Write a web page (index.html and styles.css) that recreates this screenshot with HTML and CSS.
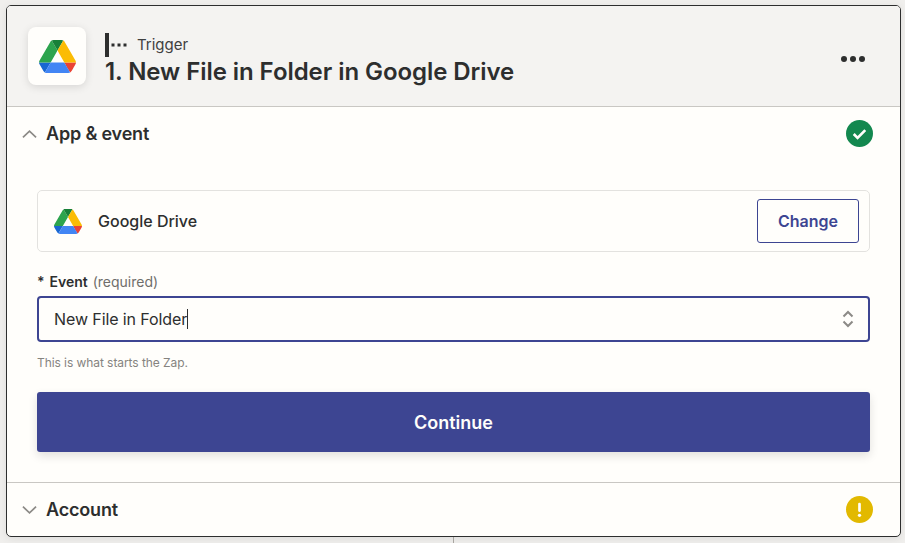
FILE: index.html
```html
<!DOCTYPE html>
<html lang="en">
<head>
  <meta charset="UTF-8" />
  <meta name="viewport" content="width=device-width, initial-scale=1" />
  <title>Trigger step</title>
  <link rel="stylesheet" href="styles.css">
</head>
<body>

<svg class="defs" width="0" height="0" aria-hidden="true">
  <symbol id="drive" viewBox="0 0 87.3 78">
    <path d="m6.6 66.85 3.85 6.65c.8 1.4 1.95 2.5 3.3 3.3l13.75-23.8h-27.5c0 1.55.4 3.1 1.2 4.5z" fill="#1967d2"/>
    <path d="m43.65 25-13.75-23.8c-1.35.8-2.5 1.9-3.3 3.3l-25.4 44a9.06 9.06 0 0 0 -1.2 4.5h27.5z" fill="#2da44e"/>
    <path d="m73.55 76.8c1.35-.8 2.5-1.9 3.3-3.3l1.6-2.75 7.65-13.25c.8-1.4 1.2-2.95 1.2-4.5h-27.502l5.852 11.5z" fill="#ea4335"/>
    <path d="m43.65 25 13.75-23.8c-1.35-.8-2.9-1.2-4.5-1.2h-18.5c-1.6 0-3.15.45-4.5 1.2z" fill="#188038"/>
    <path d="m59.8 53h-32.3l-13.75 23.8c1.35.8 2.9 1.2 4.5 1.2h50.8c1.6 0 3.15-.45 4.5-1.2z" fill="#4285f4"/>
    <path d="m73.4 26.5-12.7-22c-.8-1.4-1.95-2.5-3.3-3.3l-13.75 23.8 16.15 28h27.45c0-1.55-.4-3.1-1.2-4.5z" fill="#fbbc04"/>
  </symbol>
</svg>

<main class="card">
  <header class="card-head">
    <div class="app-tile">
      <svg class="drive-lg"><use href="#drive"/></svg>
    </div>
    <div class="head-text">
      <div class="step-kind">
        <svg class="trigger-icon" viewBox="0 0 24 24">
          <rect x="0" y="0" width="4" height="24" fill="#2d2e2e"/>
          <rect x="6.5" y="10.5" width="3" height="3" fill="#2d2e2e"/>
          <rect x="12.5" y="10.5" width="3" height="3" fill="#2d2e2e"/>
          <rect x="18.5" y="10.5" width="3" height="3" fill="#2d2e2e"/>
        </svg>
        <span>Trigger</span>
      </div>
      <h1>1. New File in Folder in Google Drive</h1>
    </div>
    <div class="more">
      <i></i><i></i><i></i>
    </div>
  </header>

  <section class="section">
    <div class="section-head">
      <svg class="chevron" viewBox="0 0 16 10"><path d="M1 8.5 8 2l7 6.5" /></svg>
      <h2>App &amp; event</h2>
      <svg class="status" viewBox="0 0 28 28">
        <circle cx="14" cy="14" r="14" fill="#13884f"/>
        <path d="M8 14.5l4 4 8-8" fill="none" stroke="#fffefb" stroke-width="2.8"/>
      </svg>
    </div>

    <div class="section-body">
      <div class="app-row">
        <svg class="drive-sm"><use href="#drive"/></svg>
        <span class="app-name">Google Drive</span>
        <button class="btn-change">Change</button>
      </div>

      <label class="field-label"><span class="star">*</span> <b>Event</b> <span class="req">(required)</span></label>
      <div class="select">
        <span class="select-value">New File in Folder</span><span class="caret"></span>
        <svg class="updown" viewBox="0 0 12 18">
          <path d="M1.5 6.5 6 2l4.5 4.5M1.5 11.5 6 16l4.5-4.5" />
        </svg>
      </div>
      <p class="hint">This is what starts the Zap.</p>

      <button class="btn-continue">Continue</button>
    </div>
  </section>

  <section class="section section-last">
    <div class="section-head">
      <svg class="chevron" viewBox="0 0 16 10"><path d="M1 1.5 8 8l7-6.5" /></svg>
      <h2>Account</h2>
      <svg class="status" viewBox="0 0 28 28">
        <circle cx="14" cy="14" r="14" fill="#e2b900"/>
        <rect x="12.6" y="7" width="2.8" height="9.5" rx="1.2" fill="#fffefb"/>
        <circle cx="14" cy="20" r="1.7" fill="#fffefb"/>
      </svg>
    </div>
  </section>
</main>
<div class="connector"></div>

</body>
</html>
```

FILE: styles.css
```css
html, body {
  height: 100%;
}
body {
  font-family: Inter, "Liberation Sans", sans-serif;
  margin: 0;
  padding: 5px 4px 0 6px;
  box-sizing: border-box;
  background: #f0efed;
  color: #2d2e2e;
  overflow: hidden;
}
.defs {
  position: absolute;
}
.card {
  height: 532px;
  box-sizing: border-box;
  background: #fffefb;
  border: 1px solid #2d2e2e;
  border-radius: 5px;
  box-shadow: 0 2px 8px rgba(0,0,0,0.08);
  overflow: hidden;
}
.connector {
  width: 1px;
  height: 7px;
  margin-left: 447px;
  background: #a8a5a0;
}
.card-head {
  height: 101px;
  box-sizing: border-box;
  display: flex;
  align-items: center;
  padding: 0 35px 0 21px;
  background: #f4f3f1;
  border-bottom: 1px solid #c9c7c3;
}
.app-tile {
  width: 58px;
  height: 58px;
  display: flex;
  align-items: center;
  justify-content: center;
  background: #fffefb;
  border-radius: 8px;
  box-shadow: 0 2px 8px rgba(0,0,0,0.12);
}
.drive-lg {
  width: 37px;
  height: 33px;
}
.head-text {
  flex: 1;
  margin-left: 19px;
  padding-top: 7px;
}
.step-kind {
  display: flex;
  align-items: center;
  font-size: 15px;
  line-height: 24px;
  color: #3f4040;
}
.trigger-icon {
  width: 24px;
  height: 24px;
  margin-right: 8px;
}
h1 {
  margin: 0;
  font-size: 24px;
  line-height: 30px;
  font-weight: 600;
  letter-spacing: -0.06px;
}
.more {
  display: flex;
  gap: 3px;
  margin-top: 6px;
}
.more i {
  width: 6px;
  height: 6px;
  border-radius: 50%;
  background: #2d2e2e;
}
.section-head {
  height: 53px;
  display: flex;
  align-items: center;
  padding: 0 27px 0 15px;
}
.section-head h2 {
  flex: 1;
  margin: 0 0 0 9px;
  font-size: 18px;
  font-weight: 600;
  letter-spacing: -0.18px;
}
.chevron {
  width: 15px;
  height: 10px;
  fill: none;
  stroke: #8c8a86;
  stroke-width: 1.8;
}
.status {
  width: 27px;
  height: 27px;
}
.section-body {
  padding: 30px 30px 30px;
  border-bottom: 1px solid #c9c7c3;
}
.app-row {
  height: 62px;
  box-sizing: border-box;
  display: flex;
  align-items: center;
  padding: 0 10px 0 16px;
  border: 1px solid #e3e2df;
  border-radius: 5px;
}
.drive-sm {
  width: 28px;
  height: 25px;
}
.app-name {
  flex: 1;
  margin-left: 16px;
  font-size: 16px;
  font-weight: 500;
}
.btn-change {
  width: 102px;
  height: 44px;
  font-family: inherit;
  font-size: 16px;
  font-weight: 600;
  color: #3d4592;
  background: #fffefb;
  border: 1px solid #3d4592;
  border-radius: 3px;
}
.field-label {
  display: block;
  margin-top: 22px;
  font-size: 14px;
  line-height: 16px;
}
.field-label b {
  font-weight: 600;
  margin: 0 1px;
}
.star {
  font-weight: 600;
}
.req {
  color: #6f6e6b;
}
.select {
  height: 46px;
  box-sizing: border-box;
  margin-top: 6px;
  display: flex;
  align-items: center;
  padding: 0 14px 0 15px;
  border: 2px solid #3d4592;
  border-radius: 4px;
  font-size: 16px;
}
.select-value {
  white-space: nowrap;
  letter-spacing: -0.1px;
}
.caret {
  width: 1px;
  height: 20px;
  background: #2d2e2e;
  flex: none;
}
.updown {
  width: 12px;
  height: 18px;
  margin-left: auto;
  fill: none;
  stroke: #8c8a86;
  stroke-width: 2;
}
.hint {
  margin: 13px 0 0;
  font-size: 12px;
  line-height: 15px;
  letter-spacing: -0.07px;
  color: #85837f;
}
.btn-continue {
  display: block;
  width: 100%;
  height: 60px;
  margin-top: 22px;
  font-family: inherit;
  font-size: 18px;
  font-weight: 600;
  color: #fffefb;
  background: #3d4592;
  border: none;
  border-radius: 3px;
  box-shadow: 0 4px 10px rgba(0,0,0,0.12);
}
```
